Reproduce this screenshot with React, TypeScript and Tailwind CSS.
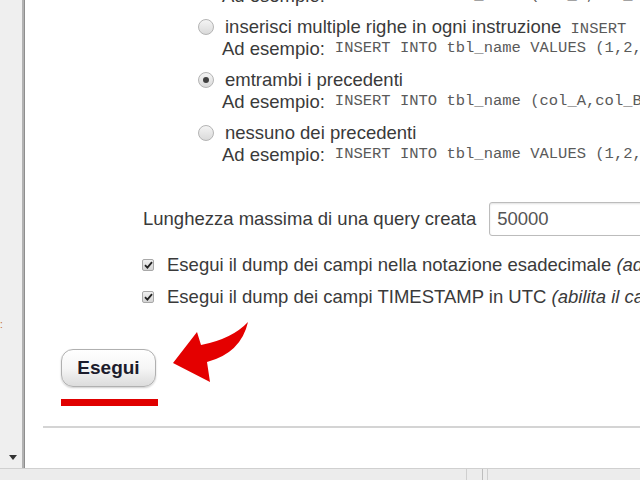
import React from "react"

type Option = {
  label: string
  tail?: string
  example: string
  checked?: boolean
}

const options: Option[] = [
  { label: "inserisci i nomi delle colonne in ogni istruzione", tail: "INSERT", example: "INSERT INTO tbl_name (col_A,col_B,col_C) VALUES (1,2,3)" },
  { label: "inserisci multiple righe in ogni instruzione", tail: "INSERT", example: "INSERT INTO tbl_name VALUES (1,2,3), (4,5,6), (7,8,9)" },
  { label: "emtrambi i precedenti", example: "INSERT INTO tbl_name (col_A,col_B,col_C) VALUES (1,2,3), (4,5,6)", checked: true },
  { label: "nessuno dei precedenti", example: "INSERT INTO tbl_name VALUES (1,2,3)" },
]

function Radio({ checked }: { checked?: boolean }) {
  return (
    <span className="w-[16px] h-[16px] rounded-full border border-[#b4b4b4] bg-gradient-to-b from-[#f4f4f4] to-[#dadada] flex items-center justify-center shrink-0">
      {checked && <span className="w-[6px] h-[6px] rounded-full bg-[#404040]" />}
    </span>
  )
}

function Check() {
  return (
    <span className="w-[12px] h-[12px] rounded-[2px] border border-[#a8a8a8] bg-gradient-to-b from-[#f0f0f0] to-[#d4d4d4] flex items-center justify-center shrink-0">
      <svg width="9" height="8" viewBox="0 0 9 8">
        <path d="M1 4.2 L3.4 6.6 L8 1.2" fill="none" stroke="#222" strokeWidth="1.8" />
      </svg>
    </span>
  )
}

export default function App() {
  return (
    <div className="w-[640px] h-[480px] relative overflow-hidden bg-white text-[#3a3a3a] font-['Liberation_Sans',Arial,sans-serif] text-[18.5px]">
      <div className="flex h-[468px]">
        {/* sidebar */}
        <div className="w-[22px] bg-[#efefef] flex flex-col justify-end items-center pb-[8px] relative">
          <span className="absolute left-0 top-[320px] text-[10px] leading-none text-[#c06a2a]">:</span>
          <svg width="8" height="5" viewBox="0 0 8 5" className="ml-[4px]">
            <path d="M0 0 L8 0 L4 5 Z" fill="#333" />
          </svg>
        </div>
        <div className="w-[3px] bg-[#b2b2b2] border-r border-[#8e8e8e]" />

        {/* main */}
        <div className="flex-1 pl-[2px] overflow-hidden whitespace-nowrap">
          <div className="pl-[171px] mt-[-37px] flex flex-col gap-[9px]">
            {options.map((o, i) => (
              <div key={i} className="flex flex-col">
                <div className="h-[22px] flex items-center gap-[11px]">
                  <Radio checked={o.checked} />
                  <span>
                    {o.label}
                    {o.tail && (
                      <span className="font-['Liberation_Mono','Courier_New',monospace] text-[15.5px] text-[#5a5a5a]"> {o.tail}</span>
                    )}
                  </span>
                </div>
                <div className="h-[22px] flex items-center pl-[24px]">
                  <span>Ad esempio:</span>
                  <span className="ml-[10px] font-['Liberation_Mono','Courier_New',monospace] text-[15.5px] text-[#5a5a5a]">
                    {o.example}
                  </span>
                </div>
              </div>
            ))}
          </div>

          <div className="mt-[36px] pl-[116px] flex items-center h-[34px]">
            <span className="shrink-0">Lunghezza massima di una query creata</span>
            <div className="ml-[13px] w-[240px] shrink-0 h-[34px] border border-[#bcbcbc] rounded-[3px] shadow-[inset_0_1px_2px_rgba(0,0,0,0.12)] flex items-center px-[7px] text-[#555]">
              50000
            </div>
          </div>

          <div className="mt-[18px] pl-[115px] flex flex-col gap-[10px]">
            <div className="h-[22px] flex items-center gap-[13px]">
              <Check />
              <span>
                Esegui il dump dei campi nella notazione esadecimale{" "}
                <i>(ad esempio, "abc" diventa 0x616263)</i>
              </span>
            </div>
            <div className="h-[22px] flex items-center gap-[13px]">
              <Check />
              <span>
                Esegui il dump dei campi TIMESTAMP in UTC <i>(abilita il caricamento tra fusi orari)</i>
              </span>
            </div>
          </div>

          <div className="mt-[41px] pl-[34px]">
            <button className="w-[95px] h-[38px] rounded-[12px] border border-[#b0b0b0] bg-gradient-to-b from-white via-[#f6f6f6] to-[#dcdcdc] shadow-[0_1px_2px_rgba(0,0,0,0.2)] font-bold text-[19px] text-[#1c1c2c] flex items-center justify-center">
              Esegui
            </button>
            <div className="mt-[12px] w-[97px] h-[7px] bg-[#e00000]" />
          </div>

          <div className="mt-[20px] ml-[16px] h-[2px] bg-[#d4d4d4]" />
        </div>
      </div>

      {/* bottom bar */}
      <div className="h-[12px] border-t border-[#d0d0d0] bg-[#ececec] flex">
        <div className="w-[467px] border-r border-[#cfcfcf]" />
        <div className="w-[16px] border-r border-[#bdbdbd]" />
        <div className="w-[5px] border-r border-[#cfcfcf]" />
        <div className="flex-1" />
      </div>

      {/* red arrow */}
      <svg className="absolute left-0 top-0" width="640" height="480" viewBox="0 0 640 480">
        <path
          d="M173 363 L197 332 L201 345 Q232 339 248 322 Q241 353 207 362 L210 382 Z"
          fill="#e40000"
        />
      </svg>
    </div>
  )
}
